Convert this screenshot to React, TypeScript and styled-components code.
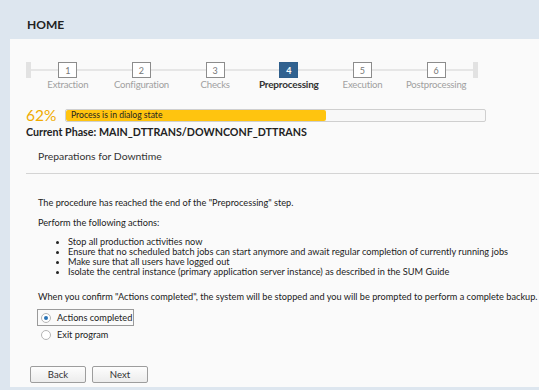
import React from "react";
import styled, { createGlobalStyle } from "styled-components";

const Global = createGlobalStyle`
  html, body { margin: 0; padding: 0; background: #dde6ef; }
  body { font-family: Lato, "Noto Sans", sans-serif; color: #333; }
  * { box-sizing: border-box; }
`;

const Page = styled.div`
  width: 539px;
  height: 390px;
  display: flex;
  flex-direction: column;
  overflow: hidden;
`;

const Header = styled.div`
  height: 39px;
  display: flex;
  align-items: center;
  padding-left: 27px;
  padding-top: 10px;
  font-size: 12px;
  font-weight: 700;
  color: #222;
`;

const Panel = styled.div`
  margin-left: 10px;
  height: 348px;
  background: #fafafa;
  display: flex;
  flex-direction: column;
  padding-left: 16px;
`;

const Stepper = styled.div`
  display: flex;
  align-items: flex-start;
  margin-top: 23px;
`;

const Cap = styled.div`
  width: 5px;
  height: 16px;
  background: #e2e2e2;
`;

const Steps = styled.div`
  width: 442px;
  display: grid;
  grid-template-columns: repeat(6, 1fr);
  background: linear-gradient(#e6e6e6, #e6e6e6) 0 7px / 100% 2px no-repeat;
`;

const Step = styled.div`
  display: flex;
  flex-direction: column;
  align-items: center;
`;

const StepBox = styled.div<{ $active?: boolean }>`
  width: 19px;
  height: 16px;
  border: 1px solid ${(p) => (p.$active ? "#2f5f8c" : "#8c8c8c")};
  background: ${(p) => (p.$active ? "#316290" : "#fff")};
  color: ${(p) => (p.$active ? "#fff" : "#777")};
  font-size: 9px;
  font-weight: ${(p) => (p.$active ? 700 : 400)};
  display: flex;
  align-items: center;
  justify-content: center;
  line-height: 1;
`;

const StepLabel = styled.div<{ $active?: boolean }>`
  margin-top: 0px;
  font-size: ${(p) => (p.$active ? "10px" : "9.6px")};
  letter-spacing: -0.2px;
  line-height: 13px;
  color: ${(p) => (p.$active ? "#333" : "#a0a0a0")};
  font-weight: ${(p) => (p.$active ? 700 : 400)};
  white-space: nowrap;
`;

const ProgressRow = styled.div`
  display: flex;
  align-items: center;
  gap: 9px;
  margin-top: 14px;
  height: 20px;
`;

const Percent = styled.div`
  font-size: 15.5px;
  color: #f0ab00;
  width: 30px;
  line-height: 20px;
`;

const Bar = styled.div`
  position: relative;
  width: 421px;
  height: 13px;
  border: 1px solid #cfcfcf;
  border-radius: 2px;
  background: #f8f8f8;
  overflow: hidden;
`;

const Fill = styled.div`
  height: 100%;
  background: #ffc40f;
  border-radius: 2px;
  display: flex;
  align-items: center;
  padding-left: 5px;
  font-size: 8.6px;
  color: #222;
  white-space: nowrap;
`;

const Phase = styled.div`
  font-size: 10.7px;
  font-weight: 700;
  color: #222;
  line-height: 14px;
  white-space: nowrap;
`;

const Section = styled.div`
  font-size: 10.4px;
  color: #333;
  padding-left: 12px;
  margin-top: 10px;
  line-height: 14px;
`;

const Divider = styled.div`
  height: 1px;
  background: #d4d4d4;
  margin-top: 10px;
`;

const Content = styled.div`
  padding-left: 12px;
  display: flex;
  flex-direction: column;
  font-size: 9.2px;
  color: #222;
  white-space: nowrap;
`;

const Para = styled.p<{ $mt: number }>`
  margin: ${(p) => p.$mt}px 0 0 0;
  line-height: 12px;
`;

const List = styled.ul`
  margin: 8px 0 0 0;
  padding-left: 30px;
  list-style: disc;
  line-height: 10px;
  & li::marker { font-size: 8px; }
`;

const RadioGroup = styled.div`
  display: flex;
  flex-direction: column;
  align-items: flex-start;
  margin-top: 6px;
  margin-left: -1px;
`;

const RadioRow = styled.label<{ $focus?: boolean }>`
  display: flex;
  align-items: center;
  gap: 6px;
  height: 17px;
  padding: 0 1px 0 3px;
  font-size: 9.2px;
  border: 1px solid ${(p) => (p.$focus ? "#9a9a9a" : "transparent")};
`;

const RadioCircle = styled.span<{ $checked?: boolean }>`
  width: 10px;
  height: 10px;
  border-radius: 50%;
  border: 1px solid #b5b5b5;
  background: #fff;
  display: flex;
  align-items: center;
  justify-content: center;
  &::after {
    content: "";
    width: 4px;
    height: 4px;
    border-radius: 50%;
    background: ${(p) => (p.$checked ? "#2a73b6" : "transparent")};
  }
`;

const Buttons = styled.div`
  display: flex;
  gap: 6px;
  margin-top: 23px;
  margin-left: 4px;
`;

const Button = styled.button`
  width: 56px;
  height: 17px;
  border: 1px solid #9d9d9d;
  border-radius: 2px;
  background: linear-gradient(#fdfdfd, #ececec);
  font-family: Lato, "Noto Sans", sans-serif;
  font-size: 9.6px;
  color: #333;
  padding: 0;
  line-height: 1;
`;

const steps = ["Extraction", "Configuration", "Checks", "Preprocessing", "Execution", "Postprocessing"];
const actions = [
  "Stop all production activities now",
  "Ensure that no scheduled batch jobs can start anymore and await regular completion of currently running jobs",
  "Make sure that all users have logged out",
  "Isolate the central instance (primary application server instance) as described in the SUM Guide",
];

export default function App() {
  const progress = 62;
  return (
    <Page>
      <Global />
      <Header>HOME</Header>
      <Panel>
        <Stepper>
          <Cap />
          <Steps>
            {steps.map((s, i) => (
              <Step key={s}>
                <StepBox $active={i === 3}>{i + 1}</StepBox>
                <StepLabel $active={i === 3}>{s}</StepLabel>
              </Step>
            ))}
          </Steps>
          <Cap />
        </Stepper>
        <ProgressRow>
          <Percent>{progress}%</Percent>
          <Bar>
            <Fill style={{ width: `${progress}%` }}>Process is in dialog state</Fill>
          </Bar>
        </ProgressRow>
        <Phase>Current Phase: MAIN_DTTRANS/DOWNCONF_DTTRANS</Phase>
        <Section>Preparations for Downtime</Section>
        <Divider />
        <Content>
          <Para $mt={23}>The procedure has reached the end of the "Preprocessing" step.</Para>
          <Para $mt={8}>Perform the following actions:</Para>
          <List>
            {actions.map((a) => (
              <li key={a}>{a}</li>
            ))}
          </List>
          <Para $mt={14}>
            When you confirm "Actions completed", the system will be stopped and you will be prompted to perform a complete backup.
          </Para>
          <RadioGroup>
            <RadioRow $focus>
              <RadioCircle $checked />
              Actions completed
            </RadioRow>
            <RadioRow>
              <RadioCircle />
              Exit program
            </RadioRow>
          </RadioGroup>
        </Content>
        <Buttons>
          <Button>Back</Button>
          <Button>Next</Button>
        </Buttons>
      </Panel>
    </Page>
  );
}
